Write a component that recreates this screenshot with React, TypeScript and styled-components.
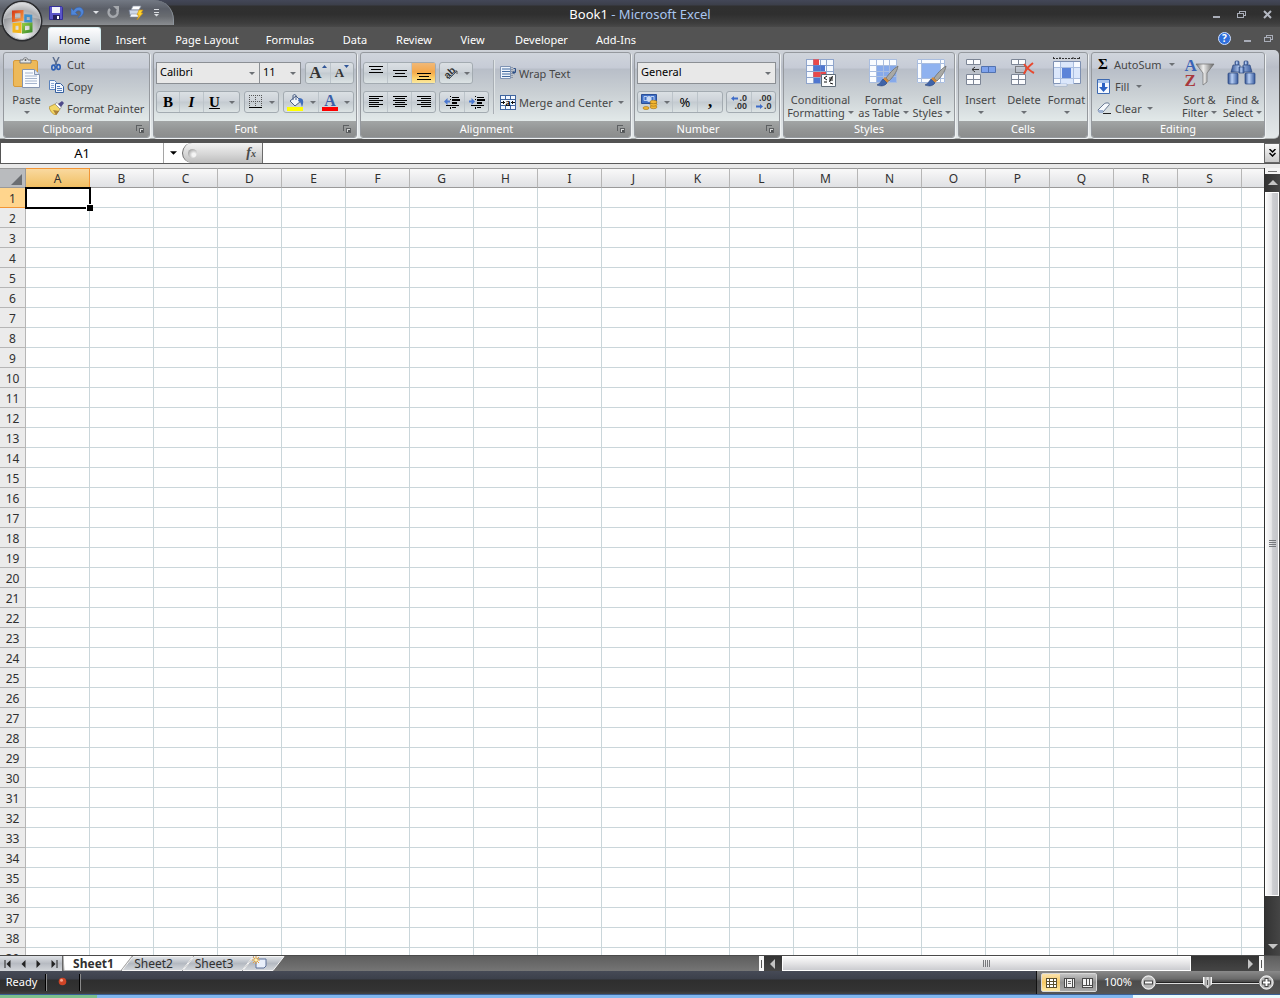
import React from "react";
import styled, { createGlobalStyle, css } from "styled-components";

const Global = createGlobalStyle`
  * { box-sizing: border-box; }
  html, body { margin: 0; padding: 0; background: #535353; }
  body, button, input, select { font-family: "Noto Sans", "Open Sans", sans-serif; font-size: 11px; }
  button, input, select { margin: 0; padding: 0; border: 0; background: none; color: inherit; border-radius: 0; outline: none; }
  svg { display: block; flex: none; }
`;

/* ---------- window frame ---------- */

const Window = styled.div`
  display: flex;
  flex-direction: column;
  height: 100vh;
  min-height: 400px;
  overflow: hidden;
  background: #535353;
  position: relative;
`;

const TitleBar = styled.header`
  display: grid;
  grid-template-columns: 1fr auto 1fr;
  height: 27px;
  flex: none;
  background: linear-gradient(#434758 0, #3c3f4a 5px, #303030 6px, #2f2f2f 14px, #3d3d3d 23px, #494949 27px);
`;

const QuickAccess = styled.div`
  display: flex;
  align-items: center;
  gap: 8px;
  width: 174px;
  height: 25px;
  padding-left: 49px;
  border-radius: 0 20px 0 0;
  border-right: 1px solid #8d949c;
  background: linear-gradient(#737984, #5b5f68 35%, #686b70 65%, #8a8d91);
`;

const IconButton = styled.button`
  display: flex;
  align-items: center;
  justify-content: center;
`;

const OfficeButton = styled.button`
  position: absolute;
  left: 0;
  top: 0;
`;

const Title = styled.h1`
  margin: 0;
  font-size: 13px;
  line-height: 28px;
  font-weight: 400;
  color: #a9c6ef;
  b { font-weight: 400; color: #fff; }
`;

const WindowButtons = styled.div`
  display: flex;
  justify-content: flex-end;
  align-items: center;
  gap: 16px;
  padding-right: 8px;
`;

const TabRow = styled.nav`
  display: flex;
  height: 23px;
  flex: none;
  padding-left: 48px;
  background: #535353;
`;

const Tab = styled.button<{ $active?: boolean; $w: number }>`
  width: ${(p) => p.$w}px;
  height: 23px;
  padding-top: 2px;
  color: #fff;
  ${(p) =>
    p.$active &&
    css`
      padding-top: 0;
      color: #000;
      background: linear-gradient(#fdfdfe, #e4e8ec 60%, #ced3da);
      border: 1px solid #d5ecef;
      border-bottom: 0;
      border-radius: 3px 3px 0 0;
    `}
`;

const TabRowTail = styled.div`
  display: flex;
  align-items: center;
  gap: 12px;
  margin-left: auto;
  padding-right: 6px;
`;

/* ---------- ribbon ---------- */

const Ribbon = styled.section`
  display: flex;
  gap: 3px;
  height: 89px;
  flex: none;
  margin-right: 1px;
  padding: 2px 3px;
  border-radius: 0 5px 5px 0;
  border-bottom: 1px solid #a9adad;
  background: linear-gradient(#cfd3d9, #b9bec8 17px, #c9ced4 40px, #e4e9ea);
`;

const Group = styled.div<{ $w: number }>`
  display: flex;
  flex-direction: column;
  width: ${(p) => p.$w}px;
  height: 86px;
  flex: none;
  border: 1px solid #95999e;
  border-radius: 3px;
  overflow: hidden;
  box-shadow: 1px 1px 0 #eef1f2;
  background: linear-gradient(#d0d5dc, #c6cbd6 15px, #b8bec8 16px, #cbd1d5 42px, #e2e9e9 68px);
`;

const GroupBody = styled.div`
  display: flex;
  height: 68px;
  flex: none;
`;

const GroupLabel = styled.div`
  display: flex;
  align-items: center;
  flex: 1;
  line-height: 16px;
  text-align: center;
  color: #fff;
  background: linear-gradient(#a2a5a5, #929494 60%, #8b8d8d);
  > span { flex: 1; }
  > button { width: 18px; }
`;

const Stack = styled.div<{ $pad?: number }>`
  display: flex;
  flex-direction: column;
  align-items: flex-start;
  flex: 1;
  padding-left: ${(p) => p.$pad ?? 0}px;
`;

const TextButton = styled.button<{ $gap?: number }>`
  display: flex;
  align-items: center;
  gap: ${(p) => p.$gap ?? 4}px;
  height: 22px;
  white-space: nowrap;
  color: #464646;
  > svg + svg, > span + svg { margin-left: 2px; }
`;

const LargeButton = styled.button<{ $w: number }>`
  display: flex;
  flex-direction: column;
  align-items: center;
  width: ${(p) => p.$w}px;
  height: 68px;
  padding-top: 4px;
  flex: none;
  line-height: 13px;
  white-space: nowrap;
  color: #464646;
  > svg:first-child { margin-bottom: 4px; }
`;

const Line = styled.span`
  display: flex;
  align-items: center;
  gap: 3px;
  height: 13px;
`;

const Rows = styled.div`
  display: flex;
  flex-direction: column;
  gap: 7px;
  padding: 9px 0 0 2px;
`;

const Row = styled.div<{ $gap?: number }>`
  display: flex;
  gap: ${(p) => p.$gap ?? 3}px;
  height: 22px;
`;

const ButtonSet = styled.div`
  display: flex;
  border: 1px solid #a3abb1;
  border-radius: 3px;
  background: linear-gradient(#dbe0e4, #ccd2d8 45%, #c3cad0 50%, #dce3e4);
  > button + button { border-left: 1px solid #bcc4ca; }
`;

const ToolButton = styled.button<{ $w: number; $on?: boolean; $gap?: number }>`
  display: flex;
  align-items: center;
  justify-content: center;
  gap: ${(p) => p.$gap ?? 6}px;
  width: ${(p) => p.$w}px;
  color: #000;
  background: ${(p) => (p.$on ? "linear-gradient(#f0b878, #f5a84a 45%, #fcd06a 75%, #fbe9a0)" : "none")};
`;

const Percent = styled.span`
  font-size: 13px;
`;

const Glyph = styled.span<{ $size?: number; $kind?: "italic" | "underline"; $color?: string }>`
  font-family: "Liberation Serif", serif;
  font-weight: 700;
  font-size: ${(p) => p.$size ?? 15}px;
  line-height: 16px;
  min-width: ${(p) => (p.$size ? 0 : 12)}px;
  text-align: center;
  font-style: ${(p) => (p.$kind === "italic" ? "italic" : "normal")};
  text-decoration: ${(p) => (p.$kind === "underline" ? "underline" : "none")};
  color: ${(p) => p.$color ?? "#000"};
`;

const Sizer = styled.span`
  display: flex;
  align-items: flex-start;
  height: 16px;
  > ${Glyph} { align-self: flex-end; }
`;

const Combo = styled.label<{ $w: number }>`
  display: grid;
  align-items: center;
  width: ${(p) => p.$w}px;
  height: 22px;
  border: 1px solid #8b8f94;
  background: #e8e8e8;
  select, svg { grid-area: 1 / 1; }
  select { appearance: none; width: 100%; height: 20px; padding: 0 0 3px 3px; color: #000; }
  svg { justify-self: end; margin-right: 4px; pointer-events: none; }
`;

const ComboPair = styled.div`
  display: flex;
  label + label { border-left: 0; }
`;

const Divider = styled.div`
  width: 2px;
  height: 54px;
  margin: 7px 3px 0 4px;
  border-left: 1px solid #a9afb5;
  border-right: 1px solid #dfe4e6;
`;

/* ---------- formula bar ---------- */

const FormulaBar = styled.div`
  display: flex;
  height: 21px;
  flex: none;
  margin-top: 4px;
  border-bottom: 1px solid #5a5a5a;
  background: #fff;
`;

const NameBox = styled.input`
  width: 164px;
  border-left: 1px solid #555;
  border-right: 1px solid #a5a5a5;
  text-align: center;
  font-size: 13px;
  color: #000;
`;

const NameArrow = styled(IconButton)`
  width: 18px;
`;

const FxArea = styled.div`
  display: flex;
  align-items: center;
  justify-content: space-between;
  width: 81px;
  padding: 0 6px 0 5px;
  border: 1px solid #6b6b6b;
  border-top: 0;
  border-bottom: 0;
  border-radius: 11px 0 0 11px;
  background: linear-gradient(#f2f2f2, #d4d4d4 60%, #bdbdbd);
`;

const Knob = styled.span`
  width: 9px;
  height: 9px;
  border-radius: 50%;
  background: radial-gradient(circle at 65% 65%, #f4f4f4 20%, #8f8f8f 90%);
`;

const Fx = styled.button`
  font-family: "Liberation Serif", serif;
  font-style: italic;
  font-weight: 700;
  font-size: 14px;
  line-height: 18px;
  color: #4a4a4a;
  small { font-size: 10px; }
`;

const FormulaInput = styled.input`
  flex: 1;
  min-width: 0;
  padding-left: 4px;
`;

const Expand = styled(IconButton)`
  width: 16px;
  height: 20px;
  border: 1px solid #666;
  background: linear-gradient(#fafafa, #c9c9c9);
`;

/* ---------- sheet ---------- */

const Workspace = styled.main`
  display: flex;
  flex: 1;
  min-height: 0;
  padding-top: 4px;
  background: #e9e9e9;
`;

const SheetView = styled.div`
  flex: 1;
  min-width: 0;
  overflow: hidden;
  background: #fff;
`;

const Sheet = styled.table`
  table-layout: fixed;
  width: 1306px;
  border-collapse: separate;
  border-spacing: 0;
  font-size: 12px;
  line-height: 17px;
`;

const Corner = styled.td`
  width: 26px;
  height: 20px;
  padding: 0 3px 2px 0;
  border: solid #9a9a9a;
  border-width: 1px 1px 1px 0;
  background: #b9bbbe;
  vertical-align: bottom;
  svg { margin-left: auto; }
`;

const ColumnHead = styled.th<{ $on?: boolean }>`
  width: 64px;
  height: 20px;
  padding: 1px 0 0;
  font-weight: 400;
  color: #303030;
  border: solid ${(p) => (p.$on ? "#f29536" : "#9a9a9a")};
  border-width: 1px 1px 1px 0;
  border-right-color: ${(p) => (p.$on ? "#f29536" : "#b6b6b6")};
  background: ${(p) => (p.$on ? "linear-gradient(#f9d99f, #f1bf63)" : "linear-gradient(#f9f9f9, #e0e1e4)")};
`;

const RowHead = styled.th<{ $on?: boolean }>`
  height: 20px;
  padding: 2px 0 0;
  font-weight: 400;
  color: #303030;
  border: solid ${(p) => (p.$on ? "#f29536" : "#b6b6b6")};
  border-width: 0 1px 1px 0;
  background: ${(p) => (p.$on ? "#ffd58d" : "#ebebeb")};
`;

const Cell = styled.td`
  position: relative;
  height: 20px;
  padding: 0;
  border: solid #cad6da;
  border-width: 0 1px 1px 0;
`;

const Selection = styled.div`
  position: absolute;
  z-index: 1;
  inset: -1px -2px -2px -1px;
  border: 2px solid #000;
  &::after {
    content: "";
    position: absolute;
    right: -4px;
    bottom: -4px;
    width: 6px;
    height: 6px;
    border: solid #fff;
    border-width: 1px 0 0 1px;
    background: #000;
  }
`;

const VScroll = styled.div`
  display: flex;
  flex-direction: column;
  width: 16px;
  flex: none;
  border-left: 1px solid #2f2f2f;
  background: linear-gradient(90deg, #333, #454545);
`;

const VSplit = styled.div`
  display: flex;
  align-items: center;
  justify-content: center;
  height: 6px;
  flex: none;
  background: #f4f4f4;
  &::after { content: ""; width: 9px; height: 1px; background: #777; }
`;

const ScrollArrow = styled(IconButton)`
  width: 15px;
  height: 18px;
  flex: none;
`;

const VThumb = styled.div`
  display: flex;
  align-items: center;
  justify-content: center;
  flex: 705 0 0;
  margin-right: 1px;
  border: 1px solid #fff;
  background: linear-gradient(90deg, #fafafa, #e6e6e8 45%, #cdced2 55%, #c4c5c9);
`;

const VTrack = styled.div`
  flex: 41 0 0;
`;

/* ---------- sheet tabs ---------- */

const BottomBar = styled.div`
  display: flex;
  height: 16px;
  flex: none;
  border-top: 1px solid #4a4a4a;
  background: linear-gradient(#5e5e5e, #757575);
`;

const SheetNav = styled.div`
  display: flex;
  width: 63px;
  flex: none;
  border-right: 1px solid #666;
  background: linear-gradient(#dfe2e6, #b7bbc2 50%, #d3d6da);
  button { flex: 1; }
`;

const SheetTabs = styled.div`
  display: flex;
  flex: 1;
  min-width: 0;
`;

const SheetTab = styled.button<{ $on?: boolean; $w: number }>`
  display: grid;
  width: ${(p) => p.$w}px;
  flex: none;
  margin-right: -11px;
  font-size: 12px;
  line-height: 15px;
  font-weight: ${(p) => (p.$on ? 700 : 400)};
  color: #303030;
  > svg, > span { grid-area: 1 / 1; }
  > span { z-index: 1; justify-self: center; padding-right: 9px; }
`;

const HScroll = styled.div`
  display: flex;
  width: 505px;
  flex: none;
  margin-right: 16px;
  background: linear-gradient(#333, #454545);
`;

const HSplit = styled.div`
  display: flex;
  align-items: center;
  justify-content: center;
  width: 5px;
  background: #f6f6f6;
  &::after { content: ""; width: 1px; height: 8px; background: #555; }
`;

const HArrow = styled(IconButton)`
  width: 18px;
`;

const HThumb = styled.div`
  display: flex;
  align-items: center;
  justify-content: center;
  flex: 409 0 0;
  border: 1px solid #fff;
  background: linear-gradient(#fafafa, #e4e4e6 50%, #cbccd0);
`;

const HTrack = styled.div`
  flex: 50 0 0;
`;

/* ---------- status bar ---------- */

const StatusBar = styled.footer`
  display: flex;
  height: 23px;
  flex: none;
  color: #fff;
  background: linear-gradient(#464a56, #3c404b 8px, #2e2e2e 9px, #343434 20px, #444);
`;

const StatusItem = styled.div<{ $w: number }>`
  display: flex;
  align-items: center;
  justify-content: center;
  width: ${(p) => p.$w}px;
  padding: 0 4px 2px 0;
  background:
    linear-gradient(#000, #000) calc(100% - 1px) 3px / 1px 17px no-repeat,
    linear-gradient(#8a8a8a, #8a8a8a) 100% 3px / 1px 17px no-repeat;
`;

const StatusTools = styled.div`
  display: flex;
  align-items: center;
  margin-left: auto;
  padding: 0 6px 0 4px;
  border-left: 1px solid #111;
  background: linear-gradient(#8a8a8a, #6a6a6a 8px, #4c4c4c 10px, #555);
`;

const ViewSet = styled.div`
  display: flex;
  height: 19px;
  border: 1px solid #d8d8d8;
  border-radius: 2px;
`;

const ViewButton = styled(IconButton)<{ $on?: boolean }>`
  width: 18px;
  background: ${(p) => (p.$on ? "linear-gradient(#fbe3ae, #f7c964 50%, #fde9a8)" : "linear-gradient(#c4c4c4, #8f8f8f 50%, #a8a8a8)")};
`;

const ZoomValue = styled.button`
  width: 44px;
  padding: 0 2px 2px 0;
  color: #fff;
`;

const ZoomSlider = styled.input`
  appearance: none;
  width: 103px;
  height: 17px;
  background: linear-gradient(#222, #222) 0 8px / 100% 1px no-repeat, linear-gradient(#ddd, #ddd) 0 9px / 100% 1px no-repeat;
  &::-webkit-slider-thumb {
    appearance: none;
    width: 9px;
    height: 12px;
    background: linear-gradient(#555, #555) 4px 3px / 1px 5px no-repeat, linear-gradient(90deg, #fff 1px, #9c9c9c 2px, #e2e2e2 5px, #8a8a8a 7px, #f4f4f4 8px);
    clip-path: polygon(0 0, 100% 0, 100% 65%, 50% 100%, 0 65%);
  }
`;

const Taskbar = styled.div`
  height: 4px;
  flex: none;
  border-top: 1px solid #3a5f94;
  background: linear-gradient(90deg, #7cc08c 0 97px, #81b7ee 97px calc(100% - 147px), #e9fbfd calc(100% - 147px));
`;

/* ---------- icons ---------- */

const Down = ({ c = "#6c7075", w = 6 }: { c?: string; w?: number }) => (
  <svg width={w} height={Math.ceil(w / 2)} viewBox="0 0 6 3"><path d="M0 0h6L3 3z" fill={c} /></svg>
);

const Tri = ({ dir, c = "#c4c4c4" }: { dir: "up" | "down" | "left" | "right"; c?: string }) => {
  const d = { up: "M0 7 5 2l5 5z", down: "M0 3h10L5 8z", left: "M7 0v10L2 5z", right: "M3 0v10l5-5z" }[dir];
  return <svg width="10" height="10" viewBox="0 0 10 10"><path d={d} fill={c} /></svg>;
};

const OfficeOrb = () => (
  <svg width="44" height="44" viewBox="0 0 44 44">
    <defs>
      <radialGradient id="orb" cx="50%" cy="85%" r="85%">
        <stop offset="0" stopColor="#fff" /><stop offset=".4" stopColor="#c7c8ca" /><stop offset=".75" stopColor="#8f9195" /><stop offset="1" stopColor="#d8dadd" />
      </radialGradient>
      <linearGradient id="lgR" x1="0" y1="0" x2="1" y2="1"><stop offset="0" stopColor="#d8401c" /><stop offset="1" stopColor="#f79a3a" /></linearGradient>
      <linearGradient id="lgG" x1="0" y1="0" x2="1" y2="1"><stop offset="0" stopColor="#8cc63f" /><stop offset="1" stopColor="#3f8f2e" /></linearGradient>
    </defs>
    <circle cx="22" cy="21" r="20.5" fill="#2b2c2f" />
    <circle cx="22" cy="21" r="18.5" fill="url(#orb)" stroke="#b9bcc0" />
    <path d="M4 19a18 17 0 0 1 36 0q-18-5-36 0z" fill="#fff" opacity=".28" />
    <g fill="none" strokeWidth="3">
      <path d="M13.500 12l8.500-.5v8l-8.500 1z" stroke="url(#lgR)" />
      <path d="M25.500 15.500l5.500.5v5.500l-5.500-.5z" stroke="#3f8fc9" strokeWidth="2.500" />
      <path d="M14 24.500l6-.5v7.500l-6-.5z" stroke="#f3b61f" />
      <path d="M23.500 24.500l7.500-.5v7l-7.500 1z" stroke="url(#lgG)" />
    </g>
  </svg>
);

const SaveIcon = () => (
  <svg width="14" height="14" viewBox="0 0 14 14">
    <path d="M.5.5h12l1 1v12H.5z" fill="#5b55c9" stroke="#35309a" />
    <path d="M3 1h8v6H3z" fill="#f2f3fb" /><path d="M4 9h7v5H4z" fill="#26225f" /><path d="M8 10h2v3H8z" fill="#fff" />
  </svg>
);
const UndoIcon = () => (
  <svg width="14" height="13" viewBox="0 0 14 13">
    <path d="M0 2v7h7L4.500 6.500C7 3 11 5 9.500 8.500L7 12c5-1.500 7-6 4.500-9S5 1 2.500 4.500z" fill="#4f86d8" stroke="#3560ab" strokeWidth=".6" />
  </svg>
);
const RedoIcon = () => (
  <svg width="13" height="13" viewBox="0 0 13 13">
    <path d="M3 3a4.500 4.500 0 1 0 7 1" fill="none" stroke="#a5a8ad" strokeWidth="2.500" /><path d="M6 0h6v6z" fill="#a5a8ad" />
  </svg>
);
const QuickPrint = () => (
  <svg width="16" height="16" viewBox="0 0 16 16">
    <path d="M5 1h8l-2 4H3z" fill="#fff" stroke="#8a94a5" strokeWidth=".7" />
    <path d="M1 5h12l1 5H2z" fill="#cfd8e6" stroke="#6e7a90" strokeWidth=".7" /><path d="M3 9h8v3H2z" fill="#f4f7fb" stroke="#8a94a5" strokeWidth=".6" />
    <path d="M11 5l4 0-2 3h2l-6 7 2-5H9z" fill="#ffd52e" stroke="#c98c0c" strokeWidth=".6" />
  </svg>
);
const QuickMore = () => (
  <svg width="9" height="9" viewBox="0 0 9 9"><path d="M2 1h5v1H2zM2 4h5v1H2zM2 6h5L4.500 8.500z" fill="#d9dce0" /></svg>
);
const MinIcon = () => <svg width="9" height="9" viewBox="0 0 9 9"><path d="M1 6h7v2H1z" fill="#a9adb8" /></svg>;
const RestoreIcon = () => (
  <svg width="10" height="9" viewBox="0 0 10 9" shapeRendering="crispEdges"><path d="M.5 3.500h6v4h-6zM2.500 3V1.500h6v4H7" fill="none" stroke="#a9adb8" /></svg>
);
const CloseIcon = () => <svg width="9" height="9" viewBox="0 0 9 9"><path d="M1 1l7 7M8 1L1 8" stroke="#b4b8c2" strokeWidth="2" /></svg>;
const HelpBadge = styled.span`
  display: block;
  width: 13px;
  height: 13px;
  border: 1px solid #cfe0ff;
  border-radius: 50%;
  background: #2f6fdc;
  color: #fff;
  font-size: 10px;
  font-weight: 700;
  line-height: 11px;
  text-align: center;
`;

const Launcher = () => (
  <svg width="9" height="9" viewBox="0 0 9 9" shapeRendering="crispEdges">
    <path d="M.5 6V.5H6" fill="none" stroke="#5d6062" /><path d="M3.500 3.500h4v4h-4z" fill="#d5d7d7" stroke="#5d6062" /><path d="M5 5h2v2H5z" fill="#4f5254" />
  </svg>
);
const PasteIcon = () => (
  <svg width="27" height="32" viewBox="0 0 27 32">
    <rect x=".5" y="3.500" width="24" height="26" rx="1.500" fill="#edb95a" stroke="#d79a3a" />
    <path d="M7 6V3h3c0-3 5-3 5 0h3v3z" fill="#e4e6e8" stroke="#75797e" /><circle cx="12.500" cy="3" r="1" fill="#555" />
    <path d="M9.500 12.500h12l5 5v13h-17z" fill="#fafcff" stroke="#8494b0" /><path d="M21.500 12.500v5h5" fill="#dbe4f2" stroke="#8494b0" />
    <path d="M12 16h8M12 19h12M12 21.500h12M12 24h12M12 26.500h12" stroke="#a5b4cd" />
  </svg>
);
const CutIcon = () => (
  <svg width="14" height="14" viewBox="0 0 14 14">
    <path d="M4 0l4 8M10 0L6 8" stroke="#5d6f90" strokeWidth="1.500" />
    <ellipse cx="4.500" cy="10.500" rx="1.700" ry="2.400" fill="none" stroke="#2d5fb4" strokeWidth="1.600" /><ellipse cx="9.500" cy="10" rx="1.700" ry="2.400" fill="none" stroke="#2d5fb4" strokeWidth="1.600" />
  </svg>
);
const CopyIcon = () => (
  <svg width="15" height="13" viewBox="0 0 15 13">
    <path d="M.5.5h5l2 2v7h-7z" fill="#f4f8ff" stroke="#5a82bd" /><path d="M2 3.500h3M2 5.500h3M2 7.500h3" stroke="#8aa9d6" />
    <path d="M6.500 3.500h5l3 3v6h-8z" fill="#f4f8ff" stroke="#355f9f" /><path d="M8 6.500h3M8 8.500h5M8 10.500h5" stroke="#5a82bd" />
  </svg>
);
const PainterIcon = () => (
  <svg width="15" height="14" viewBox="0 0 15 14">
    <path d="M0 6l6-3 5 5-4 6c-4-1-6-4-7-8z" fill="#f3d766" stroke="#b08a2a" strokeWidth=".7" /><path d="M6 3l2-1.500L12.500 6 11 8z" fill="#fff" stroke="#888" strokeWidth=".7" />
    <path d="M9 3l4-3 2 2-3 4z" fill="#4e4a8a" /><path d="M4 9l3 5 3-4z" fill="#7b4a1a" opacity=".6" />
  </svg>
);

const AlignV = ({ y }: { y: number }) => (
  <svg width="14" height="16" viewBox="0 0 14 16" shapeRendering="crispEdges">
    <path d={`M0 ${y}h14v1H0zM2 ${y + 3}h10v1H2zM0 ${y + 6}h14v1H0z`} fill="#000" />
  </svg>
);
const AlignH = ({ kind }: { kind: 0 | 1 | 2 }) => (
  <svg width="14" height="12" viewBox="0 0 14 12" shapeRendering="crispEdges">
    {[0, 2, 4, 6, 8, 10].map((y, i) => {
      const w = i % 2 ? 10 : 14;
      return <rect key={y} x={kind === 0 ? 0 : kind === 1 ? (14 - w) / 2 : 14 - w} y={y} width={w} height="1" fill="#000" />;
    })}
  </svg>
);
const IndentIcon = ({ out }: { out?: boolean }) => (
  <svg width="16" height="13" viewBox="0 0 16 13">
    <path d="M6 0h1v1H6zM8 1h7v1H8zM6 3h1v1H6zM8 3h8v2H8zM8 6h5v2H8zM2 9h13v1H2zM6 11h1v2H6zM8 11h4v1H8z" fill="#000" shapeRendering="crispEdges" />
    <path d={out ? "M0 5.500 3.500 2v2.500H6v2H3.500V9z" : "M6 5.500 2.500 2v2.500H0v2h2.500V9z"} fill="#4b78cf" />
  </svg>
);
const OrientLabel = styled.span`
  font-family: "Liberation Sans", sans-serif;
  font-weight: 700;
  font-size: 10px;
  line-height: 10px;
  color: #333;
  transform: rotate(-45deg);
`;
const OrientIcon = styled.span`
  display: grid;
  place-items: center;
  width: 16px;
  height: 16px;
  > * { grid-area: 1 / 1; }
`;
const BordersIcon = () => (
  <svg width="13" height="14" viewBox="0 0 13 14" shapeRendering="crispEdges">
    <path d="M0 .5h13M0 6.500h13M.5 0v12M6.500 0v12M12.500 0v12" stroke="#555" strokeDasharray="1 1" /><path d="M0 12h13v1H0z" fill="#000" />
  </svg>
);
const FillIcon = () => (
  <svg width="17" height="17" viewBox="0 0 17 17">
    <path d="M3 7l6-5 5 5-6 5z" fill="#f1f5fb" stroke="#4a5f85" /><path d="M6 6V2c0-2 3-2 3 0v4" fill="none" stroke="#4a5f85" />
    <path d="M12 4c5 0 5 4 3 9-1-3-1-5-4-6z" fill="#3f6dbd" /><path d="M0 13h16v4H0z" fill="#ff0" />
  </svg>
);
const FontColorIcon = styled.span`
  display: block;
  width: 16px;
  height: 17px;
  border-bottom: 4px solid #fe0000;
  font-family: "Liberation Serif", serif;
  font-weight: 700;
  font-size: 16px;
  line-height: 13px;
  color: #3c5fa8;
  text-align: center;
`;
const WrapIcon = () => (
  <svg width="17" height="14" viewBox="0 0 17 14">
    <path d="M.5.500h10v12H.5z" fill="#eef4fc" stroke="#7f93b3" /><path d="M2 3h8M2 5.500h8M2 8h8M2 10.500h8" stroke="#41699f" />
    <path d="M12 1v12" stroke="#5d6b80" strokeDasharray="1 1" /><path d="M13.500 2.500h2v4h-2" fill="none" stroke="#2d4f86" /><path d="M12 6.500l2.500-2v4z" fill="#2d4f86" />
  </svg>
);
const MergeGlyph = styled.span`
  display: grid;
  place-items: center;
  width: 16px;
  height: 15px;
  > * { grid-area: 1 / 1; }
`;
const MergeBox = () => (
  <svg width="16" height="15" viewBox="0 0 16 15" shapeRendering="crispEdges">
    <path d="M0 0h16v15H0z" fill="#3f659f" /><path d="M1 1h4v3H1zM6 1h4v3H6zM11 1h4v3h-4zM1 5h14v5H1zM1 11h4v3H1zM6 11h4v3H6zM11 11h4v3h-4z" fill="#f3f8ff" />
    <path d="M1 7h4v1H1zM11 7h4v1h-4zM3 6h1v3H3zM12 6h1v3h-1z" fill="#111" />
  </svg>
);
const CurrencyIcon = () => (
  <svg width="17" height="16" viewBox="0 0 17 16">
    <path d="M.5.500h15v9H.5z" fill="#3f6fc6" stroke="#2b4f97" /><path d="M3 2.500h3v4H3zM10 2.500h3v4h-3z" fill="none" stroke="#b9cff2" /><ellipse cx="8" cy="5" rx="2.200" ry="3" fill="#c9dbf6" />
    <g fill="#f2b632" stroke="#a3700f" strokeWidth=".6"><ellipse cx="12.500" cy="13" rx="3.500" ry="1.700" /><ellipse cx="12.500" cy="10.500" rx="3.500" ry="1.700" /><ellipse cx="12.500" cy="8" rx="3.500" ry="1.700" /><ellipse cx="5" cy="14" rx="3" ry="1.500" /></g>
  </svg>
);
const DecimalIcon = styled.span`
  display: flex;
  flex-direction: column;
  width: 16px;
  font-family: "Liberation Sans", sans-serif;
  font-size: 9px;
  font-weight: 700;
  line-height: 8px;
  color: #333;
  > span { display: flex; align-items: center; justify-content: flex-end; gap: 1px; }
`;
const SmallArrow = ({ right }: { right?: boolean }) => (
  <svg width="7" height="5" viewBox="0 0 7 5"><path d={right ? "M7 2.500 4 0v1.500H0v2h4V5z" : "M0 2.500 3 0v1.500h4v2H3V5z"} fill="#3e6cc8" /></svg>
);
const SizeCaret = ({ up }: { up?: boolean }) => (
  <svg width="5" height="3" viewBox="0 0 5 3"><path d={up ? "M0 3h5L2.500 0z" : "M0 0h5L2.500 3z"} fill="#2f5597" /></svg>
);

const gridLines = (w: number, h: number, cols: number, rows: number) => {
  let d = "";
  for (let i = 0; i <= cols; i++) d += `M${Math.round((i * w) / cols) + 0.5} 0v${h + 1}`;
  for (let i = 0; i <= rows; i++) d += `M0 ${Math.round((i * h) / rows) + 0.5}h${w + 1}`;
  return d;
};
const CondIcon = () => (
  <svg width="32" height="32" viewBox="0 0 32 32">
    <path d="M1 2h28v25H1z" fill="#f6f9fe" /><path d="M8 2h6v6H8zM8 15h13v5H8z" fill="#e8484a" /><path d="M8 8h12v6H8zM8 21h7v6H8z" fill="#4f76d0" />
    <g transform="translate(1 2)"><path d={gridLines(27, 24, 4, 4)} stroke="#8fa5cc" fill="none" /></g>
    <path d="M8 2h6v6H8zM8 15h13v5H8z" fill="#e8484a" opacity=".7" /><path d="M8 8h12v6H8z" fill="#4f76d0" opacity=".7" />
    <path d="M16.500 17.500h14v12h-14z" fill="#fbfcfd" stroke="#5f6b78" /><path d="M22 19l-3 2 3 2M19 25h3M24 21h4M24 23h4M27.500 19l-3 6M25 26l3 1" stroke="#111" fill="none" />
  </svg>
);
const Brush = () => (
  <g>
    <path d="M30 9c-5 3-9 8-12 12l3 3c4-4 8-9 9-15z" fill="#a9a9a5" stroke="#6f6f6c" strokeWidth=".8" />
    <path d="M17 20l4 4-2 2-4-4z" fill="#d08a3c" /><path d="M15 22l4 4c-3 4-7 3-10 2 3-1 4-4 6-6z" fill="#3f63a8" stroke="#27417a" strokeWidth=".6" />
  </g>
);
const TableStyleIcon = () => (
  <svg width="32" height="32" viewBox="0 0 32 32">
    <path d="M1 2h28v24H1z" fill="#fafcff" /><path d="M8 8h21v18H8z" fill="#86a9ea" />
    <g transform="translate(1 2)"><path d={gridLines(27, 23, 4, 4)} stroke="#a9bddf" fill="none" /></g><Brush />
  </svg>
);
const CellStyleIcon = () => (
  <svg width="32" height="32" viewBox="0 0 32 32">
    <path d="M1 2h28v24H1z" fill="#fafcff" /><path d="M1.500 2.500h27v23h-27zM1 6.500h28M1 21.500h28M5.500 2v24M24.500 2v24" stroke="#a9bddf" fill="none" />
    <path d="M6 7h18v14H6z" fill="#8fb2f0" /><Brush />
  </svg>
);
const InsertIcon = () => (
  <svg width="32" height="32" viewBox="0 0 32 32">
    <path d="M1.500 2.500h14v5h-14zM8.500 2.500v5M1.500 17.500h14v10h-14zM1.500 22.500h14M8.500 17.500v10" fill="#fbfcfe" stroke="#7d8696" />
    <path d="M16.500 9.500h14v6h-14zM23.500 9.500v6" fill="#7ea2ec" stroke="#5272b0" /><path d="M7 12.500h7M10 10l-3 2.500 3 2.500" stroke="#333" fill="none" />
  </svg>
);
const DeleteIcon = () => (
  <svg width="32" height="32" viewBox="0 0 32 32">
    <path d="M3.500 2.500h14v5h-14zM10.500 2.500v5M3.500 17.500h14v10h-14zM3.500 22.500h14M10.500 17.500v10" fill="#fbfcfe" stroke="#7d8696" />
    <path d="M7.500 9.500h10v6h-10z" fill="none" stroke="#333" strokeDasharray="1 1" /><path d="M16 7c3 4 6 7 10 9M25 6c-4 3-7 6-9 11" stroke="#e8492f" strokeWidth="2" fill="none" />
  </svg>
);
const FormatIcon = () => (
  <svg width="32" height="32" viewBox="0 0 32 32">
    <path d="M2 1.500h26M2.500 0v3M28.500 0v3M9 0v3M22 0v3" stroke="#333" strokeDasharray="2 1" /><path d="M2.500 4.500h27v22h-27z" fill="#f7faff" stroke="#7d8fb0" />
    <path d="M9 5h13v22H9zM3 10h26v11H3z" fill="#dbe7fb" /><path d="M9.500 5v22M22.500 5v22M3 10.500h26M3 21.500h26" stroke="#a9bddf" /><path d="M11 11h9v10h-9z" fill="#5c84d8" /><path d="M3 27h13v2H3z" fill="#fff" stroke="#8fa5cc" strokeWidth=".6" />
  </svg>
);
const FillDown = () => (
  <svg width="13" height="15" viewBox="0 0 13 15"><path d="M.5.500h12v14H.5z" fill="#f5f9ff" stroke="#3d69b0" /><path d="M1 1h11v3H1z" fill="#a9c4ec" /><path d="M5 4h3v4h3l-4.500 5L2 8h3z" fill="#2c62c4" /></svg>
);
const Eraser = () => (
  <svg width="15" height="13" viewBox="0 0 15 13"><path d="M1 8l6-6c2-2 7-1 5 1L6 10H2z" fill="#f5f8fc" stroke="#6a7a94" /><path d="M1 8l5 0v3H2z" fill="#9fb3d3" /><path d="M6 11.500h8" stroke="#222" /></svg>
);
const SortArt = styled.span`
  display: grid;
  width: 32px;
  height: 32px;
  margin-bottom: 4px;
  > * { grid-area: 1 / 1; }
`;
const SortLetters = styled.span`
  display: flex;
  flex-direction: column;
  align-items: flex-start;
  padding: 1px 0 0 1px;
  font-family: "Liberation Serif", serif;
  font-weight: 700;
  font-size: 17px;
  line-height: 15px;
  color: #3a63b5;
  i { font-style: normal; color: #a8383c; }
`;
const Funnel = () => (
  <svg width="32" height="32" viewBox="0 0 32 32">
    <defs><linearGradient id="fun"><stop offset="0" stopColor="#777" /><stop offset=".4" stopColor="#eee" /><stop offset="1" stopColor="#666" /></linearGradient></defs>
    <path d="M12 7h18l-7 9v9l-4 3V16z" fill="url(#fun)" stroke="#6d6d6d" strokeWidth=".7" />
  </svg>
);
const Binoculars = () => (
  <svg width="32" height="32" viewBox="0 0 32 32">
    <defs><linearGradient id="bin"><stop offset="0" stopColor="#2f4f8f" /><stop offset=".4" stopColor="#b9d0f5" /><stop offset="1" stopColor="#35589b" /></linearGradient></defs>
    <g fill="url(#bin)" stroke="#2d4880" strokeWidth=".7">
      <rect x="8" y="4" width="4" height="4" rx="1" /><rect x="17" y="4" width="4" height="4" rx="1" /><path d="M6 8h7v7H4zM16 8h7l2 7h-9z" /><path d="M12 10h5v6h-5z" />
      <rect x="1" y="16" width="10" height="11" rx="1" /><rect x="18" y="16" width="10" height="11" rx="1" />
    </g>
  </svg>
);
const Grip = ({ v }: { v?: boolean }) => (
  <svg width={v ? 7 : 8} height={v ? 8 : 7} shapeRendering="crispEdges"><path d={v ? "M0 .5h7M0 2.500h7M0 4.500h7M0 6.500h7" : "M.5 0v7M2.500 0v7M4.500 0v7M6.500 0v7"} stroke="#77797d" /></svg>
);
const NavIcon = ({ dir, end }: { dir: "left" | "right"; end?: boolean }) => (
  <svg width="8" height="8" viewBox="0 0 8 8">
    <path d={dir === "left" ? "M6.500 0v8L2.500 4z" : "M1.500 0v8l4-4z"} fill="#222" />{end && <path d={dir === "left" ? "M1 0v8" : "M7 0v8"} stroke="#222" />}
  </svg>
);
const TabShape = ({ w, on }: { w: number; on?: boolean }) => (
  <svg width={w} height="15" viewBox={`0 0 ${w} 15`}>
    <defs><linearGradient id="st" x1="0" y1="0" x2="0" y2="1"><stop offset="0" stopColor="#e3e6ea" /><stop offset=".5" stopColor="#b4b9c1" /><stop offset="1" stopColor="#d5d8dc" /></linearGradient></defs>
    <path d={on ? `M0 -1H${w}L${w - 12} 14.500H1z` : `M11 .5H${w - 1}L${w - 12} 14.500H0z`} fill={on ? "#fff" : "url(#st)"} stroke={on ? "#aaa" : "#f4f4f4"} />
  </svg>
);
const NewSheetIcon = () => (
  <svg width="15" height="13" viewBox="0 0 15 13"><path d="M4 3h10v7l-2 2H4z" fill="#e9effa" stroke="#5c7099" /><path d="M4 0v8M0 4h8M1 1l6 6M7 1L1 7" stroke="#e8a33d" /><circle cx="4" cy="4" r="1.500" fill="#fff3b0" /></svg>
);
const ZoomKnob = ({ plus }: { plus?: boolean }) => (
  <svg width="15" height="15" viewBox="0 0 15 15"><circle cx="7.500" cy="7.500" r="6.700" fill="#cfcfcf" stroke="#f2f2f2" /><circle cx="7.500" cy="7.500" r="5.500" fill="#b4b4b4" /><path d={plus ? "M3 7.500h9M7.500 3v9" : "M3 7.500h9"} stroke="#444" strokeWidth="4" /><path d={plus ? "M4 7.500h7M7.500 4v7" : "M4 7.500h7"} stroke="#fff" strokeWidth="2" /></svg>
);

/* ---------- pieces ---------- */

const RibbonGroup = ({ w, label, launcher, children }: { w: number; label: string; launcher?: boolean; children: React.ReactNode }) => (
  <Group $w={w}>
    <GroupBody>{children}</GroupBody>
    <GroupLabel>
      <span>{label}</span>
      {launcher && <IconButton aria-label={`${label} options`}><Launcher /></IconButton>}
    </GroupLabel>
  </Group>
);

const Select = ({ w, name, value }: { w: number; name: string; value: string }) => (
  <Combo $w={w}>
    <select aria-label={name} defaultValue={value}><option>{value}</option></select>
    <Down />
  </Combo>
);

const Large = ({ w, icon, a, b }: { w: number; icon: React.ReactNode; a: string; b?: string }) => (
  <LargeButton $w={w}>
    {icon}
    <Line>{a}</Line>
    <Line>{b && <span>{b}</span>}<Down /></Line>
  </LargeButton>
);

const tabs: [string, number][] = [
  ["Home", 53], ["Insert", 60], ["Page Layout", 92], ["Formulas", 74], ["Data", 56], ["Review", 62], ["View", 55], ["Developer", 83], ["Add-Ins", 66],
];
const columns = "ABCDEFGHIJKLMNOPQRS".split("");
const rows = Array.from({ length: 39 }, (_, i) => i + 1);

export default function App() {
  return (
    <Window>
      <Global />
      <TitleBar>
        <QuickAccess>
          <IconButton aria-label="Save"><SaveIcon /></IconButton>
          <IconButton aria-label="Undo"><UndoIcon /></IconButton>
          <IconButton aria-label="Undo history"><Down c="#dfe2e6" /></IconButton>
          <IconButton aria-label="Redo"><RedoIcon /></IconButton>
          <IconButton aria-label="Quick print"><QuickPrint /></IconButton>
          <IconButton aria-label="Customize"><QuickMore /></IconButton>
        </QuickAccess>
        <Title><b>Book1</b> - Microsoft Excel</Title>
        <WindowButtons>
          <IconButton aria-label="Minimize"><MinIcon /></IconButton>
          <IconButton aria-label="Restore"><RestoreIcon /></IconButton>
          <IconButton aria-label="Close"><CloseIcon /></IconButton>
        </WindowButtons>
      </TitleBar>
      <OfficeButton aria-label="Office menu"><OfficeOrb /></OfficeButton>
      <TabRow>
        {tabs.map(([t, w], i) => <Tab key={t} $w={w} $active={i === 0}>{t}</Tab>)}
        <TabRowTail>
          <IconButton aria-label="Help"><HelpBadge>?</HelpBadge></IconButton>
          <IconButton aria-label="Minimize workbook"><MinIcon /></IconButton>
          <IconButton aria-label="Restore workbook"><RestoreIcon /></IconButton>
        </TabRowTail>
      </TabRow>

      <Ribbon>
        <RibbonGroup w={147} label="Clipboard" launcher>
          <Large w={45} icon={<PasteIcon />} a="Paste" />
          <Stack>
            <TextButton><CutIcon />Cut</TextButton>
            <TextButton $gap={3}><CopyIcon />Copy</TextButton>
            <TextButton $gap={3}><PainterIcon />Format Painter</TextButton>
          </Stack>
        </RibbonGroup>

        <RibbonGroup w={204} label="Font" launcher>
          <Rows>
            <Row $gap={4}>
              <ComboPair>
                <Select w={104} name="Font" value="Calibri" />
                <Select w={41} name="Font size" value="11" />
              </ComboPair>
              <ButtonSet>
                <ToolButton $w={24} aria-label="Grow font"><Sizer><Glyph $size={17} $color="#333">A</Glyph><SizeCaret up /></Sizer></ToolButton>
                <ToolButton $w={23} aria-label="Shrink font"><Sizer><Glyph $size={13} $color="#333">A</Glyph><SizeCaret /></Sizer></ToolButton>
              </ButtonSet>
            </Row>
            <Row $gap={4}>
              <ButtonSet>
                <ToolButton $w={22}><Glyph>B</Glyph></ToolButton>
                <ToolButton $w={24}><Glyph $kind="italic">I</Glyph></ToolButton>
                <ToolButton $w={36} $gap={8}><Glyph $kind="underline">U</Glyph><Down /></ToolButton>
              </ButtonSet>
              <ButtonSet>
                <ToolButton $w={33} $gap={7} aria-label="Borders"><BordersIcon /><Down /></ToolButton>
              </ButtonSet>
              <ButtonSet>
                <ToolButton $w={34} aria-label="Fill color"><FillIcon /><Down /></ToolButton>
                <ToolButton $w={35} aria-label="Font color"><FontColorIcon>A</FontColorIcon><Down /></ToolButton>
              </ButtonSet>
            </Row>
          </Rows>
        </RibbonGroup>

        <RibbonGroup w={271} label="Alignment" launcher>
          <Rows>
            <Row>
              <ButtonSet>
                <ToolButton $w={23} aria-label="Top align"><AlignV y={1} /></ToolButton>
                <ToolButton $w={24} aria-label="Middle align"><AlignV y={5} /></ToolButton>
                <ToolButton $w={24} $on aria-label="Bottom align"><AlignV y={8} /></ToolButton>
              </ButtonSet>
              <ButtonSet>
                <ToolButton $w={32}><OrientIcon><OrientLabel>ab</OrientLabel><svg width="16" height="16" viewBox="0 0 16 16"><path d="M7 14l8-8M15 9V6h-3" stroke="#555" fill="none" /></svg></OrientIcon><Down /></ToolButton>
              </ButtonSet>
            </Row>
            <Row>
              <ButtonSet>
                <ToolButton $w={23} aria-label="Align left"><AlignH kind={0} /></ToolButton>
                <ToolButton $w={24} aria-label="Center"><AlignH kind={1} /></ToolButton>
                <ToolButton $w={24} aria-label="Align right"><AlignH kind={2} /></ToolButton>
              </ButtonSet>
              <ButtonSet>
                <ToolButton $w={24} aria-label="Decrease indent"><IndentIcon out /></ToolButton>
                <ToolButton $w={24} aria-label="Increase indent"><IndentIcon /></ToolButton>
              </ButtonSet>
            </Row>
          </Rows>
          <Divider />
          <Rows>
            <TextButton $gap={2}><WrapIcon />Wrap Text</TextButton>
            <TextButton $gap={3}><MergeGlyph><MergeBox /><Glyph $size={10}>a</Glyph></MergeGlyph>Merge and Center<Down /></TextButton>
          </Rows>
        </RibbonGroup>

        <RibbonGroup w={146} label="Number" launcher>
          <Rows>
            <Row><Select w={139} name="Number format" value="General" /></Row>
            <Row>
              <ButtonSet>
                <ToolButton $w={34} aria-label="Accounting format"><CurrencyIcon /><Down /></ToolButton>
                <ToolButton $w={25}><Percent>%</Percent></ToolButton>
                <ToolButton $w={25}><Glyph $size={17}>,</Glyph></ToolButton>
              </ButtonSet>
              <ButtonSet>
                <ToolButton $w={24}><DecimalIcon><span><SmallArrow />.0</span><span>.00</span></DecimalIcon></ToolButton>
                <ToolButton $w={24}><DecimalIcon><span>.00</span><span><SmallArrow right />.0</span></DecimalIcon></ToolButton>
              </ButtonSet>
            </Row>
          </Rows>
        </RibbonGroup>

        <RibbonGroup w={172} label="Styles">
          <Large w={73} icon={<CondIcon />} a="Conditional" b="Formatting" />
          <Large w={53} icon={<TableStyleIcon />} a="Format" b="as Table" />
          <Large w={44} icon={<CellStyleIcon />} a="Cell" b="Styles" />
        </RibbonGroup>

        <RibbonGroup w={130} label="Cells">
          <Large w={43} icon={<InsertIcon />} a="Insert" />
          <Large w={44} icon={<DeleteIcon />} a="Delete" />
          <Large w={41} icon={<FormatIcon />} a="Format" />
        </RibbonGroup>

        <RibbonGroup w={174} label="Editing">
          <Stack $pad={5}>
            <TextButton $gap={5}><Glyph>Σ</Glyph>AutoSum<Down /></TextButton>
            <TextButton $gap={5}><FillDown />Fill<Down /></TextButton>
            <TextButton $gap={3}><Eraser />Clear<Down /></TextButton>
          </Stack>
          <Large w={43} a="Sort &" b="Filter" icon={<SortArt><SortLetters><span>A</span><i>Z</i></SortLetters><Funnel /></SortArt>} />
          <Large w={43} icon={<Binoculars />} a="Find &" b="Select" />
        </RibbonGroup>
      </Ribbon>

      <FormulaBar>
        <NameBox aria-label="Name box" defaultValue="A1" />
        <NameArrow aria-label="Names"><Down c="#000" w={7} /></NameArrow>
        <FxArea><Knob /><Fx>f<small>x</small></Fx></FxArea>
        <FormulaInput aria-label="Formula" />
        <Expand aria-label="Expand formula bar"><svg width="7" height="8" viewBox="0 0 7 8"><path d="M.5 0l3 3 3-3M.5 4l3 3 3-3" fill="none" stroke="#000" strokeWidth="1.500" /></svg></Expand>
      </FormulaBar>

      <Workspace>
        <SheetView>
          <Sheet>
            <thead>
              <tr>
                <Corner><svg width="11" height="11" viewBox="0 0 11 11"><path d="M11 0v11H0z" fill="#6b6e72" /></svg></Corner>
                {columns.map((c, i) => <ColumnHead key={c} scope="col" $on={i === 0}>{c}</ColumnHead>)}
                <ColumnHead />
              </tr>
            </thead>
            <tbody>
              {rows.map((r) => (
                <tr key={r}>
                  <RowHead scope="row" $on={r === 1}>{r}</RowHead>
                  {columns.map((c) => <Cell key={c}>{r === 1 && c === "A" && <Selection />}</Cell>)}
                  <Cell />
                </tr>
              ))}
            </tbody>
          </Sheet>
        </SheetView>
        <VScroll>
          <VSplit />
          <ScrollArrow aria-label="Scroll up"><Tri dir="up" /></ScrollArrow>
          <VThumb><Grip v /></VThumb>
          <VTrack />
          <ScrollArrow aria-label="Scroll down"><Tri dir="down" /></ScrollArrow>
        </VScroll>
      </Workspace>

      <BottomBar>
        <SheetNav>
          <IconButton aria-label="First sheet"><NavIcon dir="left" end /></IconButton>
          <IconButton aria-label="Previous sheet"><NavIcon dir="left" /></IconButton>
          <IconButton aria-label="Next sheet"><NavIcon dir="right" /></IconButton>
          <IconButton aria-label="Last sheet"><NavIcon dir="right" end /></IconButton>
        </SheetNav>
        <SheetTabs>
          <SheetTab $w={70} $on><TabShape w={70} on /><span>Sheet1</span></SheetTab>
          <SheetTab $w={72}><TabShape w={72} /><span>Sheet2</span></SheetTab>
          <SheetTab $w={71}><TabShape w={71} /><span>Sheet3</span></SheetTab>
          <SheetTab $w={42} aria-label="Insert worksheet"><TabShape w={42} /><span><NewSheetIcon /></span></SheetTab>
        </SheetTabs>
        <HScroll>
          <HSplit />
          <HArrow aria-label="Scroll left"><Tri dir="left" /></HArrow>
          <HThumb><Grip /></HThumb>
          <HTrack />
          <HArrow aria-label="Scroll right"><Tri dir="right" /></HArrow>
          <HSplit />
        </HScroll>
      </BottomBar>

      <StatusBar>
        <StatusItem $w={47}>Ready</StatusItem>
        <StatusItem $w={34}><svg width="9" height="9" viewBox="0 0 9 9"><circle cx="4.500" cy="4.500" r="3.800" fill="#cf4426" /><circle cx="3.500" cy="3.200" r="1.500" fill="#f6a58c" /></svg></StatusItem>
        <StatusTools>
          <ViewSet>
            <ViewButton $on aria-label="Normal view"><svg width="11" height="10" shapeRendering="crispEdges"><path d="M0 0h11v10H0z" fill="#5a5030" /><path d="M1 1h2v2H1zM4 1h3v2H4zM8 1h2v2H8zM1 4h2v2H1zM4 4h3v2H4zM8 4h2v2H8zM1 7h2v2H1zM4 7h3v2H4zM8 7h2v2H8z" fill="#fff" /></svg></ViewButton>
            <ViewButton aria-label="Page layout view"><svg width="11" height="10" shapeRendering="crispEdges"><path d="M0 0h11v10H0z" fill="#4a4a4a" /><path d="M1 1h1v8H1zM3 1h5v8H3zM9 1h1v8H9z" fill="#f2f2f2" /><path d="M4 3h3v1H4zM4 5h3v1H4z" fill="#666" /></svg></ViewButton>
            <ViewButton aria-label="Page break preview"><svg width="11" height="10" shapeRendering="crispEdges"><path d="M0 0h11v10H0z" fill="#4a4a4a" /><path d="M1 1h3v6H1zM5 1h2v6H5zM8 1h2v6H8zM1 8h9v1H1z" fill="#f2f2f2" /></svg></ViewButton>
          </ViewSet>
          <ZoomValue>100%</ZoomValue>
          <IconButton aria-label="Zoom out"><ZoomKnob /></IconButton>
          <ZoomSlider type="range" aria-label="Zoom" min={0} max={100} defaultValue={50} />
          <IconButton aria-label="Zoom in"><ZoomKnob plus /></IconButton>
        </StatusTools>
      </StatusBar>
      <Taskbar />
    </Window>
  );
}
